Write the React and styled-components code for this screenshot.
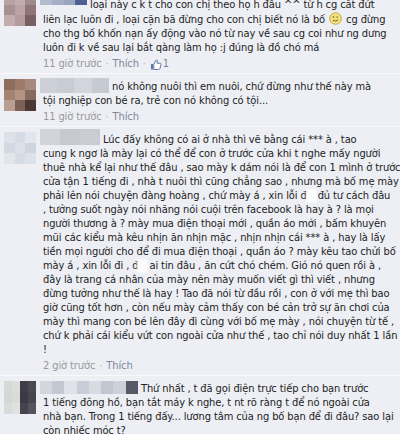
import React from "react";
import styled, { createGlobalStyle } from "styled-components";

const GlobalStyle = createGlobalStyle`
  html, body {
    margin: 0;
    padding: 0;
    background: #edeff4;
  }
  body {
    width: 400px;
    height: 434px;
    overflow: hidden;
    font-family: "DejaVu Sans Condensed", "DejaVu Sans", sans-serif;
  }
`;

const mosaic = (colors) => {
  const step = 100 / colors.length;
  return colors
    .map((c, i) => `${c} ${(i * step).toFixed(2)}% ${((i + 1) * step).toFixed(2)}%`)
    .join(", ");
};

const Feed = styled.div`
  margin-top: -9px;
  width: 400px;
`;

const Comment = styled.div`
  display: grid;
  grid-template-columns: 32px 1fr;
  column-gap: 7px;
  padding: 6px 0 2px 4px;
  border-top: 1px solid #f8f9fb;
`;

const Avatar = styled.div`
  width: 32px;
  height: ${(p) => p.$h || 32}px;
  margin-top: ${(p) => p.$top || -1}px;
  display: grid;
  grid-template-columns: repeat(${(p) => p.$cols}, 1fr);
  grid-auto-rows: 1fr;
`;

const Pixel = styled.span`
  background: ${(p) => p.$c};
`;

const Body = styled.div`
  font-size: 11px;
  line-height: 14px;
  letter-spacing: -0.1px;
  color: #222;
  white-space: nowrap;
`;

const Line = styled.div``;

const NameBlur = styled.span`
  display: inline-block;
  vertical-align: top;
  width: ${(p) => p.$w}px;
  height: ${(p) => p.$h}px;
  margin: ${(p) => p.$dy}px 3px 0 -3px;
  background: linear-gradient(90deg, ${(p) => mosaic(p.$colors)});
`;

const Censor = styled.span`
  display: inline-block;
  vertical-align: top;
  width: 9px;
  height: 12px;
  margin: 1px 2px 0 0;
  background: #fbfbfd;
  border-radius: 2px;
  box-shadow: 0 0 2px 1px #fbfbfd;
`;

const Meta = styled.div`
  margin-top: 2px;
  color: #999;
  display: flex;
  align-items: center;
  gap: 4px;
`;

const Dot = styled.span`
  color: #b4b8c2;
`;

const LikeLink = styled.span`
  color: #7d879b;
`;

const Likes = styled.span`
  display: inline-flex;
  align-items: center;
  gap: 1px;
  color: #7d879b;
`;

const Smiley = () => (
  <svg width="13" height="13" viewBox="0 0 13 13" style={{ verticalAlign: "-2px", margin: "0 1px" }}>
    <circle cx="6.5" cy="6.5" r="5.8" fill="#f3df7c" stroke="#c4a443" strokeWidth="0.9" />
    <circle cx="4.5" cy="5" r="0.8" fill="#6b5520" />
    <path d="M7.4 5 h1.6" stroke="#6b5520" strokeWidth="0.9" />
    <path d="M4 8.2 q2.5 2 5 -0.3" stroke="#6b5520" strokeWidth="0.9" fill="none" />
  </svg>
);

const ThumbIcon = () => (
  <svg width="12" height="11" viewBox="0 0 12 11">
    <path d="M1 5 h2 v5.5 h-2 z" fill="#5f78ab" />
    <path
      d="M3.8 5.2 L6 1.2 Q7 0.6 7.4 1.6 L7 4.2 H10.4 Q11.4 4.4 11 5.4 L9.9 9.6 Q9.6 10.5 8.6 10.5 H3.8 Z"
      fill="#ffffff"
      stroke="#5f78ab"
      strokeWidth="1"
    />
  </svg>
);

const avatars = {
  a: {
    cols: 3,
    cells: ["#b8a2a3", "#c4adae", "#a18a8b", "#a99091", "#bca4a5", "#8f7576", "#c2acad", "#b49b9c", "#7a5f61"],
  },
  b: {
    cols: 3,
    cells: ["#8e6c5e", "#9d7b6b", "#a88a7d", "#a48272", "#b59382", "#876a5f", "#b99d90", "#7d6158", "#4c3734"],
  },
  c: {
    cols: 3,
    cells: ["#dde2ea", "#d6dce6", "#e2e6ed", "#d3d9e3", "#dce1e9", "#cfd5df", "#e1e5ec", "#d6dbe4", "#dde1e9"],
  },
  d: {
    cols: 4,
    cells: [
      "#d7d9d7", "#dcdedc", "#3f3e48", "#4b4a54",
      "#d5d7d5", "#d9dbd9", "#3b3a44", "#47464f",
      "#dadcda", "#e0e1e0", "#45444d", "#55545c",
    ],
  },
};

const Pic = ({ kind, h, top }) => (
  <Avatar $cols={avatars[kind].cols} $h={h} $top={top}>
    {avatars[kind].cells.map((c, i) => (
      <Pixel key={i} $c={c} />
    ))}
  </Avatar>
);

const MetaRow = ({ time, likes }) => (
  <Meta>
    <span>{time}</span>
    <Dot>·</Dot>
    <LikeLink>Thích</LikeLink>
    {likes && (
      <>
        <Dot>·</Dot>
        <Likes>
          <ThumbIcon />
          {likes}
        </Likes>
      </>
    )}
  </Meta>
);

const comment3 = [
  "cung k ngơ là mày lại có thể để con ở trước cửa khi t nghe mấy người",
  "thuê nhà kể lại như thế đâu , sao mày k dám nói là để con 1 mình ở trước",
  "cửa tận 1 tiếng đi , nhà t nuôi thì cũng chẳng sao , nhưng mà bố mẹ mày",
];

const comment3b = [
  ", tưởng suốt ngày nói nhăng nói cuội trên facebook là hay à ? là mọi",
  "người thương à ? mày mua điện thoại mới , quần áo mới , bấm khuyên",
  "mũi các kiểu mà kêu nhịn ăn nhịn mặc , nhịn nhịn cái *** à , hay là lấy",
  "tiền mọi người cho để đi mua điện thoại , quần áo ? mày kêu tao chửi bố",
];

const comment3c = [
  "đây là trang cá nhân của mày nên mày muốn viết gì thì viết , nhưng",
  "đừng tưởng như thế là hay ! Tao đã nói từ đầu rồi , con ở với mẹ thì bao",
  "giờ cũng tốt hơn , còn nếu mày cảm thấy con bé cản trở sự ăn chơi của",
  "mày thì mang con bé lên đây đi cùng với bố mẹ mày , nói chuyện từ tế ,",
  "chứ k phải cái kiểu vứt con ngoài cửa như thế , tao chỉ nói duy nhất 1 lần",
  "!",
];

export default function App() {
  return (
    <>
      <GlobalStyle />
      <Feed>
        <Comment>
          <Pic kind="a" top={-4} />
          <Body>
            <Line>
              <NameBlur $w={47} $h={10} $dy={-3} $colors={["#b3bccf", "#a4aec5", "#9aa6bf", "#4d6192"]} />
              loại này c k t cho con chị theo họ h đâu ^^ từ h cg cắt đứt
            </Line>
            <Line>
              liên lạc luôn đi , loại cặn bã đừng cho con chị biết nó là bố <Smiley /> cg đừng
            </Line>
            <Line>cho thg bố khốn nạn ấy động vào nó từ nay về sau cg coi như ng dưng</Line>
            <Line>luôn đi k về sau lại bắt qàng làm họ :j đúng là đồ chó má</Line>
            <MetaRow time="11 giờ trước" likes="1" />
          </Body>
        </Comment>

        <Comment>
          <Pic kind="b" />
          <Body>
            <Line>
              <NameBlur $w={69} $h={15} $dy={-2} $colors={["#cdd0d7", "#c8ccd4", "#d2d5db", "#c6cad2"]} />
              nó không nuôi thì em nuôi, chứ đừng như thế này mà
            </Line>
            <Line>tội nghiệp con bé ra, trẻ con nó không có tội...</Line>
            <MetaRow time="11 giờ trước" />
          </Body>
        </Comment>

        <Comment>
          <Pic kind="c" />
          <Body>
            <Line>
              <NameBlur $w={60} $h={16} $dy={-4} $colors={["#d1d4da", "#c6c9d0", "#c9ccd3"]} />
              Lúc đấy không có ai ở nhà thì vẽ bằng cái *** à , tao
            </Line>
            {comment3.map((t) => (
              <Line key={t}>{t}</Line>
            ))}
            <Line>
              phải lên nói chuyện đàng hoàng , chứ mày á , xin lỗi đ<Censor />đủ tư cách đâu
            </Line>
            {comment3b.map((t) => (
              <Line key={t}>{t}</Line>
            ))}
            <Line>
              mày á , xin lỗi đi , đ<Censor />ai tin đâu , ăn cứt chó chém. Gió nó quen rồi à ,
            </Line>
            {comment3c.map((t) => (
              <Line key={t}>{t}</Line>
            ))}
            <MetaRow time="2 giờ trước" />
          </Body>
        </Comment>

        <Comment>
          <Pic kind="d" h={33} />
          <Body>
            <Line>
              <NameBlur
                $w={98}
                $h={13}
                $dy={-1}
                $colors={["#d3d6dd", "#c4c8d2", "#dfe2e8", "#c9cdd7", "#d8dbe2", "#c2c6d1", "#cdd1da", "#565a66"]}
              />
              Thứ nhất , t đã gọi điện trực tiếp cho bạn trước
            </Line>
            <Line>1 tiếng đông hồ, bạn tắt máy k nghe, t nt rõ ràng t để nó ngoài cửa</Line>
            <Line>nhà bạn. Trong 1 tiếng đấy... lương tâm của ng bố bạn để đi đâu? sao lại</Line>
            <Line>còn nhiếc móc t?</Line>
          </Body>
        </Comment>
      </Feed>
    </>
  );
}
